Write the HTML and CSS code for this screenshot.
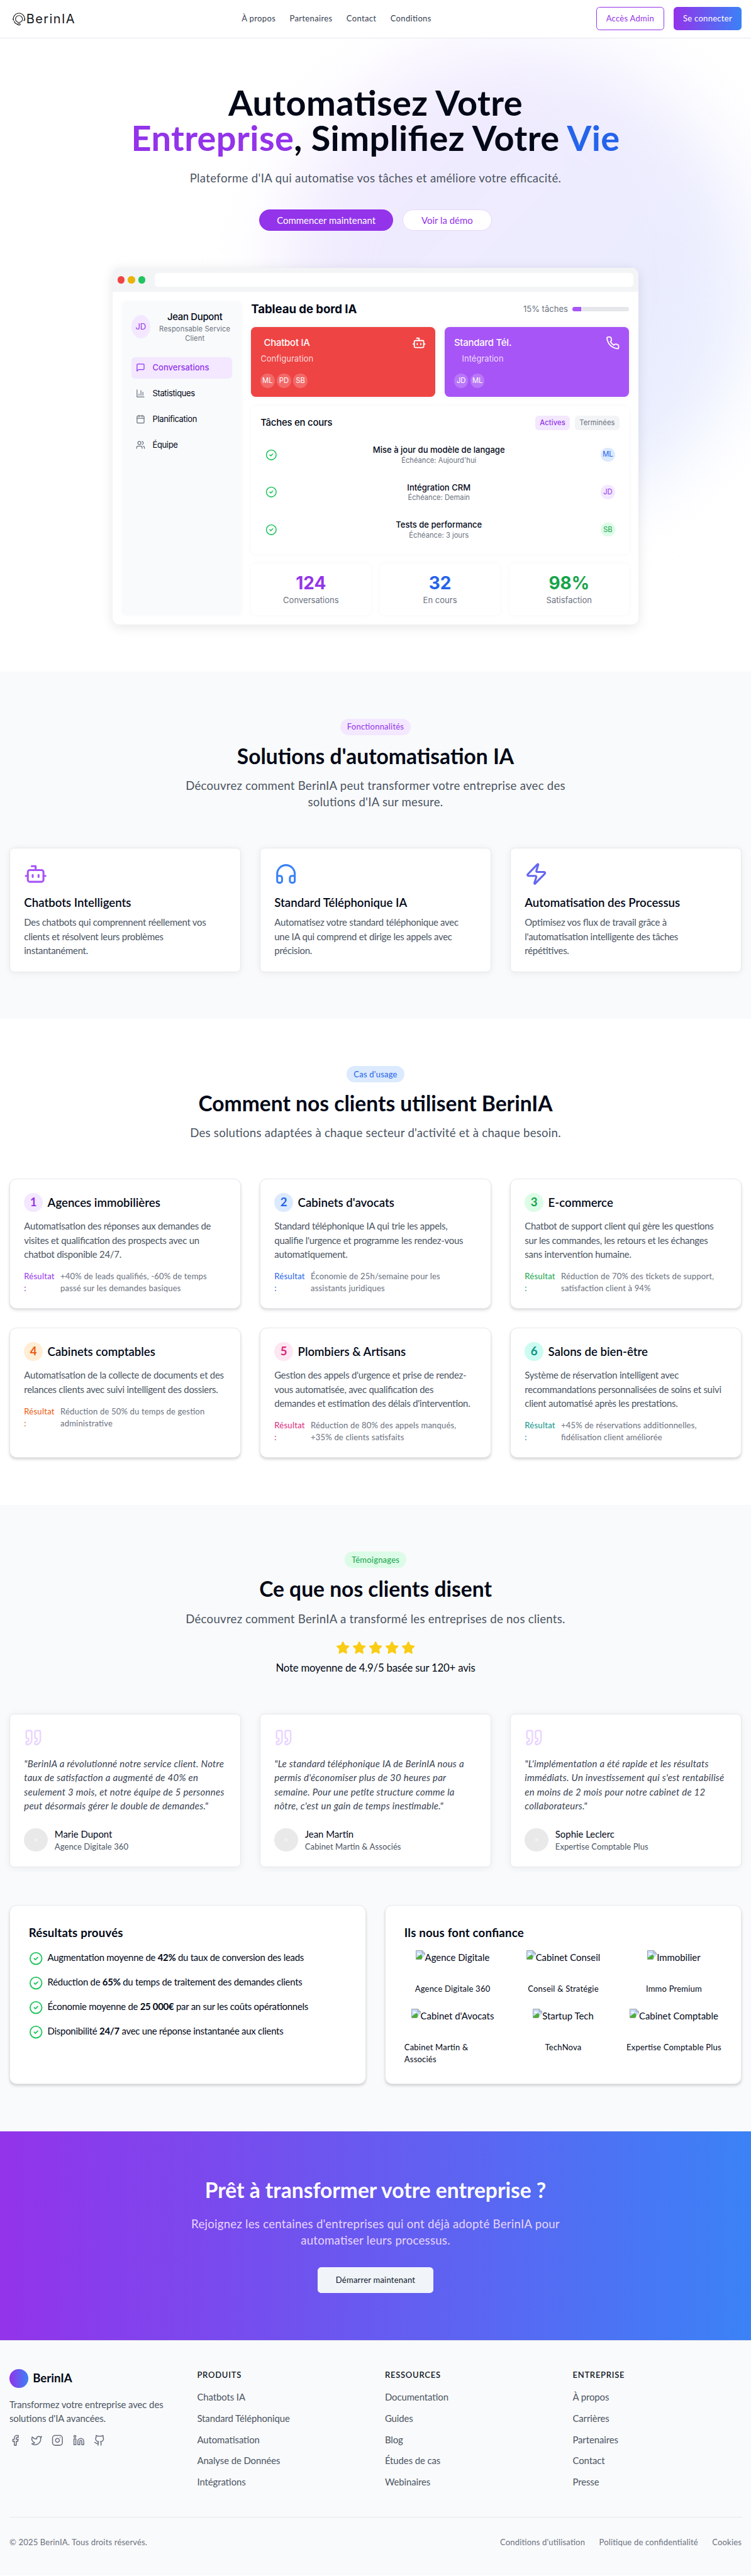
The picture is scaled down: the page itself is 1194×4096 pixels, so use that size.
FILE: index.html
```html
<!DOCTYPE html>
<html lang="fr">
<head>
<meta charset="utf-8">
<title>BerinIA</title>
<link rel="stylesheet" href="styles.css">
</head>
<body>
<svg class="sprite" aria-hidden="true">
  <symbol id="bot" viewBox="0 0 24 24"><path d="M12 8V4H8"/><rect width="16" height="12" x="4" y="8" rx="2"/><path d="M2 14h2M20 14h2M15 13v2M9 13v2"/></symbol>
  <symbol id="phone" viewBox="0 0 24 24"><path d="M22 16.92v3a2 2 0 0 1-2.18 2 19.79 19.79 0 0 1-8.63-3.07 19.5 19.5 0 0 1-6-6 19.79 19.79 0 0 1-3.07-8.67A2 2 0 0 1 4.11 2h3a2 2 0 0 1 2 1.72 12.84 12.84 0 0 0 .7 2.81 2 2 0 0 1-.45 2.11L8.09 9.91a16 16 0 0 0 6 6l1.27-1.27a2 2 0 0 1 2.11-.45 12.84 12.84 0 0 0 2.81.7A2 2 0 0 1 22 16.92z"/></symbol>
  <symbol id="message" viewBox="0 0 24 24"><path d="M21 15a2 2 0 0 1-2 2H7l-4 4V5a2 2 0 0 1 2-2h14a2 2 0 0 1 2 2z"/></symbol>
  <symbol id="chart" viewBox="0 0 24 24"><path d="M3 3v18h18M18 17V9M13 17V5M8 17v-3"/></symbol>
  <symbol id="calendar" viewBox="0 0 24 24"><path d="M8 2v4M16 2v4M3 10h18"/><rect width="18" height="18" x="3" y="4" rx="2"/></symbol>
  <symbol id="users" viewBox="0 0 24 24"><path d="M16 21v-2a4 4 0 0 0-4-4H6a4 4 0 0 0-4 4v2"/><circle cx="9" cy="7" r="4"/><path d="M22 21v-2a4 4 0 0 0-3-3.87M16 3.13a4 4 0 0 1 0 7.75"/></symbol>
  <symbol id="check" viewBox="0 0 24 24"><circle cx="12" cy="12" r="10"/><path d="m9 12 2 2 4-4"/></symbol>
  <symbol id="headphones" viewBox="0 0 24 24"><path d="M3 14h3a2 2 0 0 1 2 2v3a2 2 0 0 1-2 2H5a2 2 0 0 1-2-2v-7a9 9 0 0 1 18 0v7a2 2 0 0 1-2 2h-1a2 2 0 0 1-2-2v-3a2 2 0 0 1 2-2h3"/></symbol>
  <symbol id="zap" viewBox="0 0 24 24"><path d="M4 14a1 1 0 0 1-.78-1.63l9.9-10.2a.5.5 0 0 1 .86.46l-1.92 6.02A1 1 0 0 0 13 10h7a1 1 0 0 1 .78 1.63l-9.9 10.2a.5.5 0 0 1-.86-.46l1.92-6.02A1 1 0 0 0 11 14z"/></symbol>
  <symbol id="quote" viewBox="0 0 24 24"><path d="M16 3a2 2 0 0 0-2 2v6a2 2 0 0 0 2 2 1 1 0 0 1 1 1v1a2 2 0 0 1-2 2 1 1 0 0 0-1 1v2a1 1 0 0 0 1 1 6 6 0 0 0 6-6V5a2 2 0 0 0-2-2z"/><path d="M5 3a2 2 0 0 0-2 2v6a2 2 0 0 0 2 2 1 1 0 0 1 1 1v1a2 2 0 0 1-2 2 1 1 0 0 0-1 1v2a1 1 0 0 0 1 1 6 6 0 0 0 6-6V5a2 2 0 0 0-2-2z"/></symbol>
  <symbol id="star" viewBox="0 0 24 24"><path d="M12 2l3.09 6.26L22 9.27l-5 4.87 1.18 6.88L12 17.77l-6.18 3.25L7 14.14 2 9.27l6.91-1.01z"/></symbol>
  <symbol id="facebook" viewBox="0 0 24 24"><path d="M18 2h-3a5 5 0 0 0-5 5v3H7v4h3v8h4v-8h3l1-4h-4V7a1 1 0 0 1 1-1h3z"/></symbol>
  <symbol id="twitter" viewBox="0 0 24 24"><path d="M22 4s-.7 2.1-2 3.4c1.6 10-9.4 17.3-18 11.6 2.2.1 4.4-.6 6-2C3 15.5.5 9.6 3 5c2.2 2.6 5.6 4.1 9 4-.9-4.2 4-6.6 7-3.8 1.1 0 3-1.2 3-1.2z"/></symbol>
  <symbol id="instagram" viewBox="0 0 24 24"><rect width="20" height="20" x="2" y="2" rx="5"/><path d="M16 11.37A4 4 0 1 1 12.63 8 4 4 0 0 1 16 11.37zM17.5 6.5h.01"/></symbol>
  <symbol id="linkedin" viewBox="0 0 24 24"><path d="M16 8a6 6 0 0 1 6 6v7h-4v-7a2 2 0 0 0-2-2 2 2 0 0 0-2 2v7h-4v-7a6 6 0 0 1 6-6z"/><rect width="4" height="12" x="2" y="9"/><circle cx="4" cy="4" r="2"/></symbol>
  <symbol id="github" viewBox="0 0 24 24"><path d="M15 22v-4a4.8 4.8 0 0 0-1-3.5c3 0 6-2 6-5.5.08-1.25-.27-2.48-1-3.5.28-1.15.28-2.35 0-3.5 0 0-1 0-3 1.5-2.64-.5-5.36-.5-8 0C6 2 5 2 5 2c-.3 1.15-.3 2.35 0 3.5A5.4 5.4 0 0 0 4 9c0 3.5 3 5.5 6 5.5-.39.49-.68 1.05-.85 1.65-.17.6-.22 1.23-.15 1.85v4"/><path d="M9 18c-4.51 2-5-2-7-2"/></symbol>
  <symbol id="missing" viewBox="0 0 16 16"><path d="M.5.5h10.500l4.500 4.500v10.500H.5z" fill="#c6dbfa" stroke="none"/><path d="M3 7.200a1.800 1.800 0 0 1 3.200-1.700A1.500 1.500 0 0 1 8 7.200z" fill="#fff" stroke="none"/><path d="M1 15.500V13l7.500-5.500L11 9v6.500z" fill="#4fae33" stroke="none"/><path d="M9.500 15.500 15.500 8v7.500z" fill="#fff" stroke="none"/><path d="M15.500 8V5L11 .5H.5v15H9M11 .5V5h4.500" fill="none" stroke="#9a9a9a" stroke-width="1"/></symbol>
</svg>

<header class="header">
  <div class="logo">
    <svg class="logo-mark" viewBox="0 0 24 24"><circle cx="12" cy="12" r="5.900"/><path d="M2.800 14.500A9.600 9.600 0 1 1 21.200 14.500M2.800 10c-1.200 1-1.200 3.500 0 4.500M21.200 10c1.200 1 1.200 3.500 0 4.500l-1.500.4M3.500 15.500c1.200 3 3.500 5 6.300 5.600"/><ellipse cx="12" cy="21.200" rx="2.300" ry="1.300"/></svg>
    <span class="logo-text">BerinIA</span>
  </div>
  <nav class="nav"><a>À propos</a><a>Partenaires</a><a>Contact</a><a>Conditions</a></nav>
  <div class="actions"><button class="btn btn-outline">Accès Admin</button><button class="btn btn-gradient">Se connecter</button></div>
</header>

<section class="hero">
  <div class="glow"></div>
  <h1>Automatisez Votre<br><span class="purple">Entreprise</span>, Simplifiez Votre <span class="blue">Vie</span></h1>
  <p class="lead">Plateforme d'IA qui automatise vos tâches et améliore votre efficacité.</p>
  <div class="hero-buttons"><button class="pill pill-solid">Commencer maintenant</button><button class="pill pill-light">Voir la démo</button></div>

  <div class="window">
    <div class="titlebar"><i class="dot red"></i><i class="dot yellow"></i><i class="dot green"></i><div class="address"></div></div>
    <div class="app">
      <aside class="side">
        <div class="profile"><span class="face">JD</span><div class="who"><div class="who-name">Jean Dupont</div><div class="who-role">Responsable Service Client</div></div></div>
        <div class="menu">
          <a class="active"><svg class="icon"><use href="#message"/></svg>Conversations</a>
          <a><svg class="icon"><use href="#chart"/></svg>Statistiques</a>
          <a><svg class="icon"><use href="#calendar"/></svg>Planification</a>
          <a><svg class="icon"><use href="#users"/></svg>Équipe</a>
        </div>
      </aside>
      <div class="board">
        <div class="board-head"><div class="board-title">Tableau de bord IA</div><div class="progress"><span>15% tâches</span><div class="track"><div class="fill" style="width:15%"></div></div></div></div>
        <div class="tiles">
          <div class="tile tile-red"><div class="tile-top"><div class="tile-text"><div class="tile-title">Chatbot IA</div><div class="tile-sub">Configuration</div></div><svg class="icon"><use href="#bot"/></svg></div><div class="chips"><span>ML</span><span>PD</span><span>SB</span></div></div>
          <div class="tile tile-purple"><div class="tile-top"><div class="tile-text"><div class="tile-title">Standard Tél.</div><div class="tile-sub">Intégration</div></div><svg class="icon"><use href="#phone"/></svg></div><div class="chips"><span>JD</span><span>ML</span></div></div>
        </div>
        <div class="tasks">
          <div class="tasks-head"><div class="tasks-title">Tâches en cours</div><div class="tabs"><span class="tab on">Actives</span><span class="tab">Terminées</span></div></div>
          <div class="task"><svg class="icon"><use href="#check"/></svg><div class="task-text"><div>Mise à jour du modèle de langage</div><small>Échéance: Aujourd'hui</small></div><span class="chip c-blue">ML</span></div>
          <div class="task"><svg class="icon"><use href="#check"/></svg><div class="task-text"><div>Intégration CRM</div><small>Échéance: Demain</small></div><span class="chip c-purple">JD</span></div>
          <div class="task"><svg class="icon"><use href="#check"/></svg><div class="task-text"><div>Tests de performance</div><small>Échéance: 3 jours</small></div><span class="chip c-green">SB</span></div>
        </div>
        <div class="stats">
          <div class="stat"><b class="t-purple">124</b><span>Conversations</span></div>
          <div class="stat"><b class="t-blue">32</b><span>En cours</span></div>
          <div class="stat"><b class="t-green">98%</b><span>Satisfaction</span></div>
        </div>
      </div>
    </div>
  </div>
</section>

<section class="section tinted">
  <div class="intro"><span class="badge c-purple">Fonctionnalités</span><h2>Solutions d'automatisation IA</h2><p>Découvrez comment BerinIA peut transformer votre entreprise avec des solutions d'IA sur mesure.</p></div>
  <div class="grid3">
    <article class="card feature"><svg class="icon i-purple"><use href="#bot"/></svg><h3>Chatbots Intelligents</h3><p>Des chatbots qui comprennent réellement vos clients et résolvent leurs problèmes instantanément.</p></article>
    <article class="card feature"><svg class="icon i-blue"><use href="#headphones"/></svg><h3>Standard Téléphonique IA</h3><p>Automatisez votre standard téléphonique avec<br>une IA qui comprend et dirige les appels avec<br>précision.</p></article>
    <article class="card feature"><svg class="icon i-indigo"><use href="#zap"/></svg><h3>Automatisation des Processus</h3><p>Optimisez vos flux de travail grâce à<br>l'automatisation intelligente des tâches<br>répétitives.</p></article>
  </div>
</section>

<section class="section">
  <div class="intro"><span class="badge c-blue">Cas d'usage</span><h2>Comment nos clients utilisent BerinIA</h2><p>Des solutions adaptées à chaque secteur d'activité et à chaque besoin.</p></div>
  <div class="grid3">
    <article class="card case"><div class="case-head"><span class="num c-purple">1</span><h3>Agences immobilières</h3></div><p>Automatisation des réponses aux demandes de visites et qualification des prospects avec un chatbot disponible 24/7.</p><div class="result"><b class="t-purple">Résultat :</b><span>+40% de leads qualifiés, -60% de temps passé sur les demandes basiques</span></div></article>
    <article class="card case"><div class="case-head"><span class="num c-blue">2</span><h3>Cabinets d'avocats</h3></div><p>Standard téléphonique IA qui trie les appels, qualifie l'urgence et programme les rendez-vous automatiquement.</p><div class="result"><b class="t-blue">Résultat :</b><span>Économie de 25h/semaine pour les assistants juridiques</span></div></article>
    <article class="card case"><div class="case-head"><span class="num c-green">3</span><h3>E-commerce</h3></div><p>Chatbot de support client qui gère les questions sur les commandes, les retours et les échanges sans intervention humaine.</p><div class="result"><b class="t-green">Résultat :</b><span>Réduction de 70% des tickets de support, satisfaction client à 94%</span></div></article>
    <article class="card case"><div class="case-head"><span class="num c-orange">4</span><h3>Cabinets comptables</h3></div><p>Automatisation de la collecte de documents et des relances clients avec suivi intelligent des dossiers.</p><div class="result"><b class="t-orange">Résultat :</b><span>Réduction de 50% du temps de gestion administrative</span></div></article>
    <article class="card case"><div class="case-head"><span class="num c-pink">5</span><h3>Plombiers &amp; Artisans</h3></div><p>Gestion des appels d'urgence et prise de rendez-vous automatisée, avec qualification des<br>demandes et estimation des délais d'intervention.</p><div class="result"><b class="t-pink">Résultat :</b><span>Réduction de 80% des appels manqués, +35% de clients satisfaits</span></div></article>
    <article class="card case"><div class="case-head"><span class="num c-teal">6</span><h3>Salons de bien-être</h3></div><p>Système de réservation intelligent avec recommandations personnalisées de soins et suivi client automatisé après les prestations.</p><div class="result"><b class="t-teal">Résultat :</b><span>+45% de réservations additionnelles, fidélisation client améliorée</span></div></article>
  </div>
</section>

<section class="section tinted">
  <div class="intro"><span class="badge c-green">Témoignages</span><h2>Ce que nos clients disent</h2><p>Découvrez comment BerinIA a transformé les entreprises de nos clients.</p>
    <div class="stars"><svg class="icon"><use href="#star"/></svg><svg class="icon"><use href="#star"/></svg><svg class="icon"><use href="#star"/></svg><svg class="icon"><use href="#star"/></svg><svg class="icon"><use href="#star"/></svg></div>
    <div class="note">Note moyenne de 4.9/5 basée sur 120+ avis</div>
  </div>
  <div class="grid3">
    <article class="card voice"><svg class="icon"><use href="#quote"/></svg><blockquote>"BerinIA a révolutionné notre service client. Notre taux de satisfaction a augmenté de 40% en seulement 3 mois, et notre équipe de 5 personnes peut désormais gérer le double de demandes."</blockquote><div class="author"><i class="portrait"></i><div><b>Marie Dupont</b><span>Agence Digitale 360</span></div></div></article>
    <article class="card voice"><svg class="icon"><use href="#quote"/></svg><blockquote>"Le standard téléphonique IA de BerinIA nous a permis d'économiser plus de 30 heures par semaine. Pour une petite structure comme la nôtre, c'est un gain de temps inestimable."</blockquote><div class="author"><i class="portrait"></i><div><b>Jean Martin</b><span>Cabinet Martin &amp; Associés</span></div></div></article>
    <article class="card voice"><svg class="icon"><use href="#quote"/></svg><blockquote>"L'implémentation a été rapide et les résultats immédiats. Un investissement qui s'est rentabilisé en moins de 2 mois pour notre cabinet de 12 collaborateurs."</blockquote><div class="author"><i class="portrait"></i><div><b>Sophie Leclerc</b><span>Expertise Comptable Plus</span></div></div></article>
  </div>
  <div class="grid2">
    <div class="card panel"><h3>Résultats prouvés</h3>
      <ul class="proofs">
        <li><svg class="icon"><use href="#check"/></svg><span>Augmentation moyenne de <strong>42%</strong> du taux de conversion des leads</span></li>
        <li><svg class="icon"><use href="#check"/></svg><span>Réduction de <strong>65%</strong> du temps de traitement des demandes clients</span></li>
        <li><svg class="icon"><use href="#check"/></svg><span>Économie moyenne de <strong>25 000€</strong> par an sur les coûts opérationnels</span></li>
        <li><svg class="icon"><use href="#check"/></svg><span>Disponibilité <strong>24/7</strong> avec une réponse instantanée aux clients</span></li>
      </ul>
    </div>
    <div class="card panel"><h3>Ils nous font confiance</h3>
      <div class="partners">
        <div class="partner"><div class="pic"><svg><use href="#missing"/></svg>Agence Digitale</div><span>Agence Digitale 360</span></div>
        <div class="partner"><div class="pic"><svg><use href="#missing"/></svg>Cabinet Conseil</div><span>Conseil &amp; Stratégie</span></div>
        <div class="partner"><div class="pic"><svg><use href="#missing"/></svg>Immobilier</div><span>Immo Premium</span></div>
        <div class="partner"><div class="pic"><svg><use href="#missing"/></svg>Cabinet d'Avocats</div><span class="wide">Cabinet Martin &amp;<br>Associés</span></div>
        <div class="partner"><div class="pic"><svg><use href="#missing"/></svg>Startup Tech</div><span>TechNova</span></div>
        <div class="partner"><div class="pic"><svg><use href="#missing"/></svg>Cabinet Comptable</div><span>Expertise Comptable Plus</span></div>
      </div>
    </div>
  </div>
</section>

<section class="cta">
  <h2>Prêt à transformer votre entreprise ?</h2>
  <p>Rejoignez les centaines d'entreprises qui ont déjà adopté BerinIA pour automatiser leurs processus.</p>
  <button class="cta-button">Démarrer maintenant</button>
</section>

<footer class="footer">
  <div class="footer-grid">
    <div><div class="brand"><i class="orb"></i>BerinIA</div><p>Transformez votre entreprise avec des solutions d'IA avancées.</p>
      <div class="social"><svg class="icon"><use href="#facebook"/></svg><svg class="icon"><use href="#twitter"/></svg><svg class="icon"><use href="#instagram"/></svg><svg class="icon"><use href="#linkedin"/></svg><svg class="icon"><use href="#github"/></svg></div></div>
    <div class="links"><h4>Produits</h4><a>Chatbots IA</a><a>Standard Téléphonique</a><a>Automatisation</a><a>Analyse de Données</a><a>Intégrations</a></div>
    <div class="links"><h4>Ressources</h4><a>Documentation</a><a>Guides</a><a>Blog</a><a>Études de cas</a><a>Webinaires</a></div>
    <div class="links"><h4>Entreprise</h4><a>À propos</a><a>Carrières</a><a>Partenaires</a><a>Contact</a><a>Presse</a></div>
  </div>
  <div class="legal"><span>© 2025 BerinIA. Tous droits réservés.</span><div><a>Conditions d'utilisation</a><a>Politique de confidentialité</a><a>Cookies</a></div></div>
</footer>
</body>
</html>
```

FILE: styles.css
```css
/* All sizes are in rem, so the root size scales the whole page. */
html { font-size: 14.925px; }
*, *::before, *::after { box-sizing: border-box; }
body { margin: 0; background: #fff; color: #020817; font-family: Lato, "Liberation Sans", sans-serif; font-size: 1rem; line-height: 1.5; font-feature-settings: "liga" 1; }
h1, h2, h3, h4, p, ul, blockquote { margin: 0; padding: 0; }
button { font: inherit; border: 0; margin: 0; padding: 0; }
.sprite { display: none; }
.icon { display: block; flex: none; width: 1.5rem; height: 1.5rem; fill: none; stroke: currentColor; stroke-width: 2; stroke-linecap: round; stroke-linejoin: round; }

.t-purple { color: #9333ea; }
.t-blue { color: #2563eb; }
.t-green { color: #16a34a; }
.t-orange { color: #ea580c; }
.t-pink { color: #db2777; }
.t-teal { color: #0d9488; }
.c-purple { color: #9333ea; background: #f3e8ff; }
.c-blue { color: #2563eb; background: #dbeafe; }
.c-green { color: #16a34a; background: #dcfce7; }
.c-orange { color: #ea580c; background: #ffedd5; }
.c-pink { color: #db2777; background: #fce7f3; }
.c-teal { color: #0d9488; background: #ccfbf1; }

/* Header */
.header { display: flex; align-items: center; justify-content: space-between; height: 4.0625rem; padding: 0 1rem; border-bottom: 1px solid #e5e7eb; background: #fff; }
.logo { display: flex; align-items: center; width: 7.1875rem; padding-left: .25rem; }
.logo-mark { flex: none; width: 1.5rem; height: 1.5rem; fill: none; stroke: #18181b; stroke-width: 1.2; }
.logo-text { margin-left: .05rem; font-family: Inter, sans-serif; font-size: 1.34rem; line-height: 1.5rem; letter-spacing: .07em; color: #18181b; }
.nav { display: flex; gap: 1.5rem; font-size: .875rem; letter-spacing: .025em; color: #374151; }
.actions { display: flex; gap: 1rem; }
.btn { width: 7.25rem; height: 2.5rem; border-radius: .375rem; font-size: .875rem; letter-spacing: .02em; }
.btn-outline { border: 1px solid #9333ea; background: #fff; color: #9333ea; }
.btn-gradient { background: linear-gradient(90deg, #9333ea, #3b82f6); color: #fff; }

/* Hero */
.hero { position: relative; overflow: hidden; display: flex; flex-direction: column; align-items: center; padding: 5rem 0; text-align: center; }
.hero > * { position: relative; }
.hero > .glow { position: absolute; top: 1rem; right: 0; width: 50rem; height: 50rem; border-radius: 50%; background: linear-gradient(135deg, #f4eafe, #e5eefe); filter: blur(4rem); }
h1 { font-size: 3.75rem; line-height: 1; font-weight: 700; letter-spacing: .007em; }
.purple { color: #9333ea; }
.blue { color: #2563eb; }
.lead { margin-top: 1.5rem; font-size: 1.25rem; line-height: 1.75rem; letter-spacing: .0175em; color: #4b5563; }
.hero-buttons { display: flex; gap: 1rem; margin-top: 2.5rem; }
.pill { height: 2.25rem; border-radius: 2rem; }
.pill-solid { width: 14.25rem; background: #9333ea; color: #fff; }
.pill-light { width: 9.5rem; border: 1px solid #e9d5ff; background: #fff; color: #9333ea; }

/* Product window */
.window { width: 56rem; height: 38rem; margin-top: 4rem; border-radius: .75rem; overflow: hidden; background: #fff; box-shadow: 0 .25rem 1.25rem rgba(0, 0, 0, .1); font-family: Inter, "Liberation Sans", sans-serif; }
.titlebar { display: flex; align-items: center; gap: .375rem; height: 2.5rem; padding: 0 .5rem; background: #f3f4f6; }
.dot { width: .75rem; height: .75rem; border-radius: 50%; }
.red { background: #ef4444; }
.yellow { background: #eab308; }
.green { background: #22c55e; }
.address { flex: 1; height: 1.5rem; margin-left: .625rem; border-radius: .375rem; background: #fff; }
.app { display: grid; grid-template-columns: 12.75rem 40.25rem; gap: 1rem; padding: 1rem; }
.side { padding: 1rem; border-radius: .5rem; background: #f9fafb; box-shadow: 0 0 .5rem rgba(0, 0, 0, .03); }
.profile { display: flex; align-items: center; gap: .75rem; height: 3.5rem; margin-bottom: 1.5rem; }
.face { display: flex; align-items: center; justify-content: center; flex: none; width: 2rem; height: 2.5rem; border-radius: 50%; background: #f3e8ff; color: #9333ea; font-size: .875rem; }
.who { flex: 1; }
.who-name { font-weight: 500; line-height: 1.5rem; letter-spacing: -.02em; }
.who-role { font-size: .75rem; line-height: 1rem; letter-spacing: .01em; color: #6b7280; }
.menu { display: flex; flex-direction: column; gap: .5rem; }
.menu a { display: flex; align-items: center; gap: .75rem; height: 2.25rem; padding: 0 .5rem; border-radius: .375rem; font-size: .875rem; letter-spacing: -.03em; }
.menu .icon { width: 1rem; height: 1rem; color: #6b7280; }
.menu .active { background: #f3e8ff; color: #9333ea; font-weight: 500; letter-spacing: 0; }
.menu .active .icon { color: #9333ea; }
.board { display: flex; flex-direction: column; gap: 1rem; }
.board-head { display: flex; align-items: center; justify-content: space-between; height: 1.75rem; }
.board-title { font-size: 1.25rem; font-weight: 700; letter-spacing: -.005em; }
.progress { display: flex; align-items: center; gap: .5rem; font-size: .875rem; color: #6b7280; }
.track { width: 6rem; height: .5rem; border-radius: .25rem; overflow: hidden; background: #e5e7eb; }
.fill { height: 100%; background: #a855f7; }
.tiles { display: grid; grid-template-columns: 1fr 1fr; gap: 1rem; }
.tile { height: 7.5rem; padding: 1rem; border-radius: .5rem; color: #fff; box-shadow: 0 0 .5rem rgba(0, 0, 0, .08); }
.tile-red { background: #ef4444; }
.tile-purple { background: #a855f7; }
.tile-top { display: flex; justify-content: space-between; }
.tile-title { font-weight: 500; line-height: 1.5rem; letter-spacing: -.015em; }
.tile-sub { margin-top: .25rem; font-size: .875rem; line-height: 1.25rem; opacity: .8; }
.chips { display: flex; gap: .25rem; margin-top: 1rem; }
.chips span, .chip { display: flex; align-items: center; justify-content: center; flex: none; width: 1.5rem; height: 1.5rem; border-radius: 50%; font-size: .75rem; }
.chips span { background: rgba(255, 255, 255, .2); }
.tasks { height: 15.75rem; padding: 1rem; border-radius: .5rem; background: #fff; box-shadow: 0 0 .5rem rgba(0, 0, 0, .04); }
.tasks-head { display: flex; justify-content: space-between; height: 1.5rem; margin-bottom: 1rem; }
.tasks-title { font-weight: 500; line-height: 1.5rem; letter-spacing: -.015em; }
.tabs { display: flex; gap: .5rem; }
.tab { padding: 0 .5rem; border-radius: .375rem; background: #f3f4f6; color: #6b7280; font-size: .75rem; line-height: 1.5rem; letter-spacing: .01em; }
.tab.on { background: #f3e8ff; color: #9333ea; font-weight: 500; }
.task { display: flex; align-items: center; height: 3.25rem; margin-bottom: .75rem; padding: 0 .5rem; }
.task .icon { width: 1.25rem; height: 1.25rem; color: #22c55e; }
.task-text { flex: 1; padding-left: .25rem; padding-right: .25rem; font-size: .875rem; line-height: 1.25rem; font-weight: 500; }
.task-text small { display: block; font-size: .75rem; line-height: 1rem; font-weight: 400; color: #6b7280; }
.stats { display: grid; grid-template-columns: repeat(3, 1fr); gap: 1rem; }
.stat { height: 5.5rem; padding: 1rem; border-radius: .5rem; background: #fff; box-shadow: 0 0 .5rem rgba(0, 0, 0, .04); }
.stat b { display: block; font-size: 1.875rem; line-height: 2.25rem; }
.stat span { display: block; font-size: .875rem; line-height: 1.25rem; color: #6b7280; }

/* Sections */
.section { padding: 5rem 1rem; }
.tinted { background: #f9fafb; }
.intro { display: flex; flex-direction: column; align-items: center; margin-bottom: 4rem; text-align: center; }
.badge { padding: .25rem .75rem; border-radius: 1rem; font-size: .875rem; line-height: 1.25rem; letter-spacing: .015em; }
h2 { margin-top: 1rem; font-size: 2.25rem; line-height: 2.5rem; font-weight: 700; }
.intro p { max-width: 42rem; margin-top: 1rem; font-size: 1.25rem; line-height: 1.75rem; letter-spacing: .013em; color: #4b5563; }
.grid3 { display: grid; grid-template-columns: repeat(3, 1fr); gap: 2rem; }
.grid2 { display: grid; grid-template-columns: 1fr 1fr; gap: 2rem; margin-top: 4rem; }
.card { border: 1px solid #e5e7eb; border-radius: .5rem; background: #fff; padding: 1.5rem; box-shadow: 0 .125rem .75rem rgba(0, 0, 0, .06); }
h3 { font-size: 1.25rem; line-height: 1.75rem; font-weight: 600; }
.card p { letter-spacing: -.017em; color: #4b5563; }
.feature .icon { width: 2.5rem; height: 2.5rem; margin-bottom: .875rem; }
.feature h3 { margin-bottom: .5rem; }
.i-purple { color: #a855f7; }
.i-blue { color: #3b82f6; }
.i-indigo { color: #6366f1; }
.case, .panel { border-radius: .75rem; box-shadow: 0 .25rem .375rem -.0625rem rgba(0, 0, 0, .1), 0 .125rem .25rem -.125rem rgba(0, 0, 0, .1); }
.case-head { display: flex; align-items: center; gap: .5rem; margin-bottom: .75rem; }
.num { display: flex; align-items: center; justify-content: center; width: 2rem; height: 2rem; border-radius: 50%; font-size: 1.25rem; font-weight: 700; }
.result { display: flex; gap: .5rem; margin-top: 1rem; font-size: .875rem; line-height: 1.25rem; letter-spacing: .012em; color: #6b7280; }
.result b { flex: none; width: 3.375rem; font-weight: 400; letter-spacing: .02em; }
.result span { padding-right: .75rem; }
.stars { display: flex; gap: .25rem; margin-top: 1.5rem; color: #facc15; }
.stars .icon { fill: currentColor; }
.note { margin-top: .5rem; font-size: 1.125rem; line-height: 1.75rem; letter-spacing: -.013em; }
.voice .icon { width: 2rem; height: 2rem; color: #e9d5ff; }
blockquote { margin: 1rem 0 1.5rem; font-style: italic; letter-spacing: .019em; color: #374151; }
.author { display: flex; align-items: center; gap: .75rem; }
.portrait { width: 2.5rem; height: 2.5rem; border-radius: 50%; background: radial-gradient(circle, #f6f6f6 0, #e9e9e9 .25rem); }
.author b, .author span { display: block; }
.author b { font-weight: 400; }
.author span { font-size: .875rem; line-height: 1.25rem; letter-spacing: .005em; color: #4b5563; }
.panel { padding: 2rem; }
.panel h3 { font-weight: 700; letter-spacing: .01em; }
.proofs { display: flex; flex-direction: column; gap: 1rem; margin-top: 1rem; list-style: none; letter-spacing: -.017em; }
.proofs li { display: flex; gap: .5rem; }
.proofs .icon { margin-top: .125rem; color: #22c55e; }
.partners { display: grid; grid-template-columns: repeat(3, 1fr); gap: 1.5rem; margin-top: 1rem; }
.partner { display: flex; flex-direction: column; align-items: center; white-space: nowrap; }
.partner > span { font-size: .875rem; line-height: 1.25rem; letter-spacing: .015em; }
.partner .wide { width: 100%; }
.pic { display: flex; height: 3rem; margin-bottom: .5rem; }
.pic svg { width: 1rem; height: 1rem; }

/* Call to action */
.cta { display: flex; flex-direction: column; align-items: center; padding: 5rem 0; background: linear-gradient(90deg, #9333ea, #3b82f6); color: #fff; text-align: center; }
.cta h2 { margin: 0; }
.cta p { max-width: 42rem; margin: 1.5rem 0 2rem; font-size: 1.25rem; line-height: 1.75rem; letter-spacing: .013em; color: #e9d5ff; }
.cta-button { width: 12.375rem; height: 2.75rem; border-radius: .375rem; background: #f1f5f9; color: #0f172a; font-size: .875rem; letter-spacing: .015em; }

/* Footer */
.footer { padding: 3rem 1rem 2.95rem; border-top: 1px solid #e5e7eb; background: #f9fafb; color: #4b5563; letter-spacing: -.006em; }
.footer-grid { display: grid; grid-template-columns: repeat(4, 1fr); gap: 2rem; }
.brand { display: flex; align-items: center; gap: .5rem; margin-bottom: 1rem; font-size: 1.25rem; line-height: 2rem; font-weight: 700; letter-spacing: 0; color: #020817; }
.orb { width: 2rem; height: 2rem; border-radius: 50%; background: linear-gradient(90deg, #9333ea, #3b82f6); }
.social { display: flex; gap: 1rem; margin-top: 1rem; color: #6b7280; }
.social .icon { width: 1.25rem; height: 1.25rem; }
.links { display: flex; flex-direction: column; gap: .75rem; }
h4 { margin-bottom: .25rem; font-size: .875rem; line-height: 1.25rem; font-weight: 600; letter-spacing: .055em; text-transform: uppercase; color: #111827; }
.legal { display: flex; justify-content: space-between; margin-top: 3rem; padding-top: 2rem; border-top: 1px solid #e5e7eb; font-size: .875rem; line-height: 1.25rem; letter-spacing: .0125em; color: #6b7280; }
.legal div { display: flex; gap: 1.5rem; }
```
